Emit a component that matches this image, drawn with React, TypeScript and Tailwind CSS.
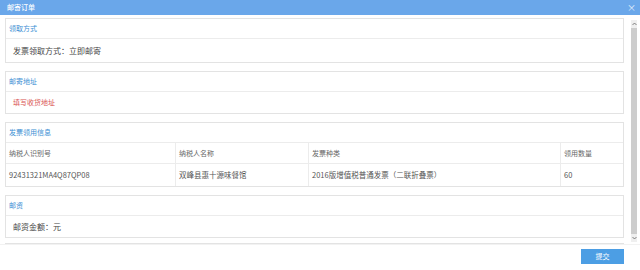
import React from "react";

const font = { fontFamily: '"Noto Sans CJK SC", "Noto Sans", sans-serif' };

function PanelHeader({ children }: { children: React.ReactNode }) {
  return (
    <div className="h-[20px] flex items-center px-[3px] border-b border-[#ececec] text-[7px] text-[#3d8fd4]">
      {children}
    </div>
  );
}

export default function App() {
  const cols = ["w-[170px]", "w-[133px]", "w-[252px]", "flex-1"];
  const head = ["纳税人识别号", "纳税人名称", "发票种类", "领用数量"];
  const row = ["92431321MA4Q87QP08", "双峰县惠十源味餐馆", "2016版增值税普通发票（二联折叠票）", "60"];
  return (
    <div style={font} className="w-[640px] h-[270px] bg-white flex flex-col overflow-hidden">
      <div className="h-[15px] bg-[#6aa7ea] flex items-center justify-between pl-[7px] pr-[4px] text-white">
        <span className="text-[7px] leading-none font-medium">邮寄订单</span>
        <span className="text-[9px] leading-none text-[#e6f0fb]">×</span>
      </div>
      <div className="flex h-[229px]">
        <div className="flex-1 overflow-hidden pl-[5px] pr-[6px] pt-[3px] flex flex-col gap-[8px]">
          <div className="border border-[#e3e3e3] shrink-0">
            <PanelHeader>领取方式</PanelHeader>
            <div className="h-[23px] flex items-center px-[7px] text-[8px] text-[#444]">发票领取方式：立即邮寄</div>
          </div>
          <div className="border border-[#e3e3e3] shrink-0">
            <PanelHeader>邮寄地址</PanelHeader>
            <div className="h-[21px] flex items-center px-[7px] text-[7px] text-[#d9534f]">填写收货地址</div>
          </div>
          <div className="border border-[#e3e3e3] shrink-0">
            <PanelHeader>发票领用信息</PanelHeader>
            <div className="flex h-[21px] border-b border-[#ececec] text-[7px] text-[#666]">
              {head.map((h, i) => (
                <div key={h} className={`${cols[i]} flex items-center px-[3px] ${i < 3 ? "border-r border-[#ececec]" : ""}`}>{h}</div>
              ))}
            </div>
            <div className="flex h-[22px] text-[7.5px] text-[#555]">
              {row.map((h, i) => (
                <div key={h} className={`${cols[i]} flex items-center px-[3px] ${i < 3 ? "border-r border-[#ececec]" : ""}`}>{h}</div>
              ))}
            </div>
          </div>
          <div className="border border-[#e3e3e3] shrink-0">
            <PanelHeader>邮资</PanelHeader>
            <div className="h-[21px] flex items-center px-[7px] text-[8px] text-[#444]">邮资金额：元</div>
          </div>
          <div className="border border-[#e3e3e3] h-[40px] shrink-0 -mt-[3px]"></div>
        </div>
        <div className="w-[10px] flex flex-col items-center pt-[5px] pb-[2px] pr-[2px]">
          <div className="w-[6px] flex-1 bg-[#efefef] flex flex-col items-center">
            <div className="h-[8px] flex items-center justify-center">
              <svg width="5" height="4" viewBox="0 0 5 4"><path d="M0.5 3 L2.5 1 L4.5 3" fill="none" stroke="#666" strokeWidth="0.8" /></svg>
            </div>
            <div className="w-[6px] flex-1 bg-[#cdcdcd]"></div>
            <div className="h-[8px] flex items-center justify-center">
              <svg width="5" height="4" viewBox="0 0 5 4"><path d="M0.5 1 L2.5 3 L4.5 1" fill="none" stroke="#666" strokeWidth="0.8" /></svg>
            </div>
          </div>
        </div>
      </div>
      <div className="flex-1 flex justify-end items-start pt-[4px] pr-[16px] border-t border-[#f2f2f2]">
        <button className="w-[43px] h-[15px] bg-[#4c9ee4] text-white text-[7px] leading-none flex items-center justify-center">提交</button>
      </div>
    </div>
  );
}
